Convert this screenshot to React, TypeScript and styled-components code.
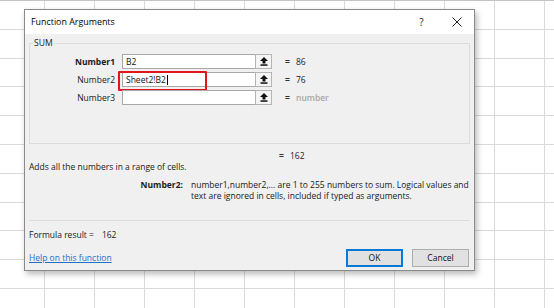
import React from "react";
import styled, { createGlobalStyle } from "styled-components";

const Global = createGlobalStyle`
  html, body { margin: 0; padding: 0; }
  body {
    width: 554px;
    height: 308px;
    overflow: hidden;
    background: #ffffff;
    font-family: "Open Sans", "Noto Sans", sans-serif;
    color: #1a1a1a;
  }
`;

const Stage = styled.div`
  position: relative;
  width: 554px;
  height: 308px;
  overflow: hidden;
  background: #fff;
`;

const Sheet = styled.div`
  display: grid;
  grid-template-columns: 45px repeat(11, 50px);
  grid-auto-rows: 28.8px;
  border-top: 1px solid #c4c4c4;
`;

const Cell = styled.div`
  box-sizing: border-box;
  border-right: 1px solid #dadada;
  border-bottom: 1px solid #dadada;
`;

const Dialog = styled.div`
  position: absolute;
  left: 24px;
  top: 9px;
  width: 451px;
  height: 262px;
  box-sizing: border-box;
  border: 1px solid #8a8a8a;
  background: #f0f0f0;
  box-shadow: 2px 3px 6px rgba(0, 0, 0, 0.28);
  display: flex;
  flex-direction: column;
  font-size: 8.5px;
  line-height: 12px;
`;

const TitleBar = styled.div`
  height: 24px;
  background: #ffffff;
  display: flex;
  align-items: center;
  padding-left: 6px;
`;

const Title = styled.div`
  flex: 1;
  font-size: 8.9px;
  color: #000;
`;

const TitleButton = styled.div`
  width: 35px;
  height: 24px;
  display: flex;
  align-items: center;
  justify-content: center;
  font-size: 10px;
  color: #222;
`;

const Body = styled.div`
  flex: 1;
  display: flex;
  flex-direction: column;
  padding: 3px 4px 0 4px;
`;

const Group = styled.fieldset`
  margin: 0;
  padding: 5px 0 38px 0;
  border: 1px solid #dcdcdc;
  min-width: 0;
`;

const Legend = styled.legend`
  margin-left: 3px;
  padding: 0 1px;
  font-size: 8.6px;
  line-height: 12px;
`;

const ArgGrid = styled.div`
  display: grid;
  grid-template-columns: 85px 150px auto;
  column-gap: 7px;
  row-gap: 3px;
  align-items: center;
`;

const ArgLabel = styled.div<{ $bold?: boolean }>`
  text-align: right;
  font-weight: ${(p) => (p.$bold ? 700 : 400)};
  color: #1a1a1a;
`;

const InputBox = styled.div`
  position: relative;
  height: 15px;
  box-sizing: border-box;
  border: 1px solid #a8a8a8;
  background: #fff;
  display: flex;
  align-items: stretch;
`;

const InputText = styled.div`
  flex: 1;
  padding-left: 3px;
  display: flex;
  align-items: center;
  color: #111;
`;

const Caret = styled.span`
  display: inline-block;
  width: 1px;
  height: 10px;
  background: #000;
  margin-left: 1px;
`;

const RefButton = styled.div`
  width: 17px;
  box-sizing: border-box;
  border: 1px solid #b4b4b4;
  margin: -1px -1px -1px 0;
  background: #f4f4f4;
  display: flex;
  align-items: center;
  justify-content: center;
`;

const Highlight = styled.div`
  position: absolute;
  left: -5px;
  top: -2px;
  width: 89px;
  height: 20px;
  box-sizing: border-box;
  border: 2px solid #e2141c;
  border-radius: 1px;
  pointer-events: none;
`;

const ValueCell = styled.div<{ $muted?: boolean }>`
  display: flex;
  align-items: center;
  padding-left: 6px;
  color: ${(p) => (p.$muted ? "#a6a6a6" : "#1a1a1a")};
  font-weight: ${(p) => (p.$muted ? 600 : 400)};
`;

const Eq = styled.span`
  width: 11px;
  color: #333;
  font-weight: 700;
`;

const ResultLine = styled.div`
  margin-top: 6px;
  padding-left: 250px;
  display: flex;
  align-items: center;
`;

const Summary = styled.div`
  margin-top: -1px;
`;

const DescGrid = styled.div`
  margin-top: 6px;
  display: grid;
  grid-template-columns: 154px 1fr;
  column-gap: 8px;
  line-height: 11px;
`;

const DescLabel = styled.div`
  text-align: right;
  font-weight: 700;
`;

const DescText = styled.div`
  white-space: nowrap;
`;

const Separator = styled.div`
  margin-top: 19px;
  height: 1px;
  background: #dcdcdc;
`;

const FormulaResult = styled.div`
  margin-top: 8px;
  display: flex;
  gap: 8px;
`;

const Footer = styled.div`
  padding-top: 8px;
  display: flex;
  align-items: center;
`;

const HelpLink = styled.a`
  flex: 1;
  color: #1f6fc5;
  text-decoration: underline;
  cursor: pointer;
`;

const Button = styled.div<{ $primary?: boolean }>`
  width: 57px;
  height: 18px;
  box-sizing: border-box;
  margin-left: 9px;
  border: ${(p) => (p.$primary ? "2px solid #0a78d7" : "1px solid #adadad")};
  background: #e1e1e1;
  display: flex;
  align-items: center;
  justify-content: center;
  color: #111;
  &:last-child { margin-right: 1px; }
`;

const UpArrow = () => (
  <svg width="8" height="9" viewBox="0 0 8 9">
    <polygon points="4,0 8,4 5.5,4 5.5,6.5 2.5,6.5 2.5,4 0,4" fill="#111" />
    <rect x="0.5" y="7.3" width="7" height="1.5" fill="#111" />
  </svg>
);

const CloseIcon = () => (
  <svg width="10" height="10" viewBox="0 0 10 10">
    <path d="M0.5 0.5 L9.5 9.5 M9.5 0.5 L0.5 9.5" stroke="#222" strokeWidth="1" />
  </svg>
);

type Arg = { label: string; value: string; result: string; bold?: boolean; muted?: boolean; active?: boolean };

const args: Arg[] = [
  { label: "Number1", value: "B2", result: "86", bold: true },
  { label: "Number2", value: "Sheet2!B2", result: "76", active: true },
  { label: "Number3", value: "", result: "number", muted: true },
];

export default function App() {
  const cells = Array.from({ length: 12 * 11 });
  return (
    <Stage>
      <Global />
      <Sheet>
        {cells.map((_, i) => (
          <Cell key={i} />
        ))}
      </Sheet>
      <Dialog>
        <TitleBar>
          <Title>Function Arguments</Title>
          <TitleButton>?</TitleButton>
          <TitleButton>
            <CloseIcon />
          </TitleButton>
        </TitleBar>
        <Body>
          <Group>
            <Legend>SUM</Legend>
            <ArgGrid>
              {args.map((a) => (
                <React.Fragment key={a.label}>
                  <ArgLabel $bold={a.bold}>{a.label}</ArgLabel>
                  <InputBox>
                    <InputText>
                      {a.value}
                      {a.active && <Caret />}
                    </InputText>
                    <RefButton>
                      <UpArrow />
                    </RefButton>
                    {a.active && <Highlight />}
                  </InputBox>
                  <ValueCell $muted={a.muted}>
                    <Eq>=</Eq>
                    {a.result}
                  </ValueCell>
                </React.Fragment>
              ))}
            </ArgGrid>
          </Group>
          <ResultLine>
            <Eq>=</Eq>
            162
          </ResultLine>
          <Summary>Adds all the numbers in a range of cells.</Summary>
          <DescGrid>
            <DescLabel>Number2:</DescLabel>
            <DescText>
              number1,number2,... are 1 to 255 numbers to sum. Logical values and
              <br />
              text are ignored in cells, included if typed as arguments.
            </DescText>
          </DescGrid>
          <Separator />
          <FormulaResult>
            <span>Formula result =</span>
            <span>162</span>
          </FormulaResult>
          <Footer>
            <HelpLink>Help on this function</HelpLink>
            <Button $primary>OK</Button>
            <Button>Cancel</Button>
          </Footer>
        </Body>
      </Dialog>
    </Stage>
  );
}
